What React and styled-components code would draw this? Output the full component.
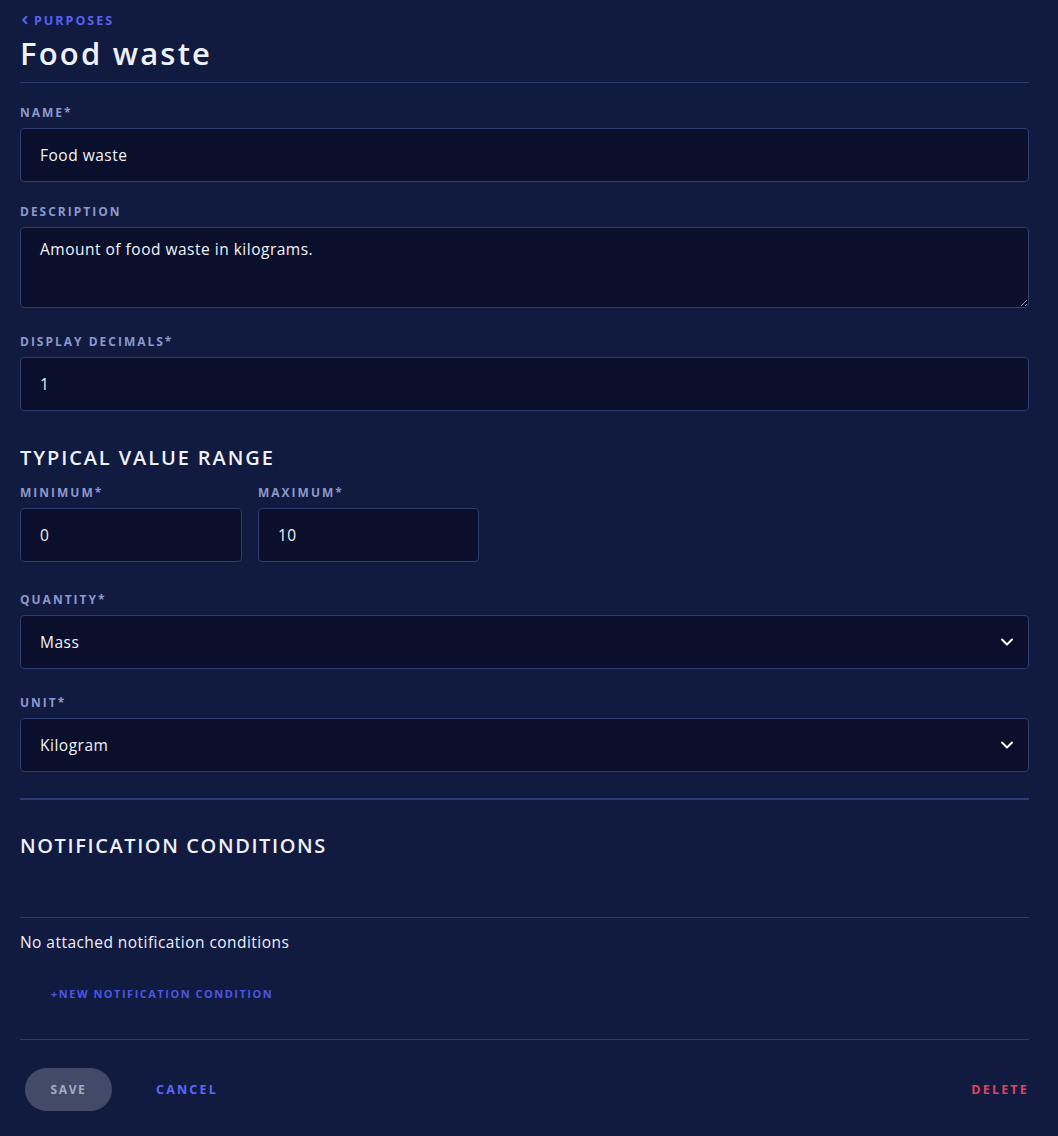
import React, { useState } from "react";
import styled, { createGlobalStyle } from "styled-components";

const GlobalStyle = createGlobalStyle`
  html, body {
    margin: 0;
    padding: 0;
    background: #111a3f;
  }
  body {
    font-family: "Open Sans", "Liberation Sans", sans-serif;
    color: #eef0fa;
  }
`;

const Page = styled.div`
  padding: 13px 29px 26px 20px;
  min-height: 1136px;
  box-sizing: border-box;
  background: #111a3f;
`;

const BackLink = styled.a`
  display: flex;
  align-items: center;
  gap: 4px;
  height: 14px;
  color: #5762f2;
  font-size: 12.5px;
  font-weight: 700;
  letter-spacing: 2px;
  text-decoration: none;
  cursor: pointer;
`;

const Title = styled.h1`
  margin: 7px 0 0;
  font-size: 31px;
  font-weight: 600;
  line-height: 38px;
  color: #eef0fa;
  letter-spacing: 2.2px;
`;

const Divider = styled.hr`
  border: none;
  border-top: ${(p) => (p.thick ? "2px" : "1px")} solid #2d3b74;
  margin: ${(p) => p.space || "0"};
`;

const Field = styled.div`
  display: flex;
  flex-direction: column;
  gap: 8px;
  margin-top: ${(p) => p.top || 0}px;
  flex: ${(p) => (p.width ? `0 0 ${p.width}px` : "none")};
`;

const Label = styled.label`
  font-size: 12px;
  font-weight: 700;
  letter-spacing: 2px;
  color: #8d98cb;
  text-transform: uppercase;
  line-height: 14px;
`;

const Input = styled.input`
  box-sizing: border-box;
  width: 100%;
  height: 54px;
  padding: 0 19px;
  background: #0a0f2b;
  border: 1px solid #2f3c73;
  border-radius: 4px;
  color: #f2f3fb;
  font-family: inherit;
  font-size: 15.5px;
  font-weight: 500;
  letter-spacing: 0.5px;
  outline: none;
`;

const TextArea = styled.textarea`
  display: block;
  box-sizing: border-box;
  width: 100%;
  height: 81px;
  padding: 11px 19px;
  background: #0a0f2b;
  border: 1px solid #2f3c73;
  border-radius: 4px;
  color: #f2f3fb;
  font-family: inherit;
  font-size: 15.5px;
  font-weight: 500;
  letter-spacing: 0.5px;
  line-height: 20px;
  resize: vertical;
  outline: none;
`;

const SelectBox = styled.div`
  box-sizing: border-box;
  height: 54px;
  padding: 0 14px 0 19px;
  display: flex;
  align-items: center;
  justify-content: space-between;
  background: #0a0f2b;
  border: 1px solid #2f3c73;
  border-radius: 4px;
  color: #f2f3fb;
  font-size: 15.5px;
  font-weight: 500;
  letter-spacing: 0.5px;
  cursor: pointer;
`;

const Row = styled.div`
  display: flex;
  gap: 16px;
  margin-top: 16px;
`;

const SectionTitle = styled.h2`
  margin: ${(p) => p.space || "0"};
  font-size: 20px;
  font-weight: 600;
  letter-spacing: ${(p) => p.spacing || 1.8}px;
  text-transform: uppercase;
  color: #eef0fa;
  line-height: 24px;
`;

const EmptyText = styled.p`
  margin: 14px 0 0;
  font-size: 15.5px;
  font-weight: 500;
  letter-spacing: 0.45px;
  color: #eef0fa;
  line-height: 20px;
`;

const TextButton = styled.button`
  background: none;
  border: none;
  padding: 0;
  font-family: inherit;
  font-size: ${(p) => p.size || 12.5}px;
  font-weight: 700;
  letter-spacing: ${(p) => p.spacing || 2.2}px;
  line-height: 16px;
  text-transform: uppercase;
  color: ${(p) => p.color || "#5a68ff"};
  cursor: pointer;
`;

const AddRow = styled.div`
  padding: 0 0 0 31px;
  height: 14px;
  display: flex;
  align-items: center;
  margin: 35px 0 38px;
`;

const Footer = styled.div`
  display: flex;
  align-items: center;
  padding: 28px 0 0 5px;
`;

const SaveButton = styled.button`
  width: 87px;
  height: 43px;
  border: none;
  border-radius: 22px;
  background: #434a69;
  color: #a7abc0;
  font-family: inherit;
  font-size: 12px;
  font-weight: 700;
  letter-spacing: 1.6px;
  cursor: default;
`;

const CancelSlot = styled.div`
  display: flex;
  align-items: center;
  margin-left: 44px;
`;

const Spacer = styled.div`
  flex: 1;
`;

const Chevron = ({ dir = "down", size = 14, stroke = 2 }) => (
  <svg width={size} height={size} viewBox="0 0 14 14" fill="none">
    {dir === "down" ? (
      <path d="M2 4.5l5 5 5-5" stroke="#fff" strokeWidth={stroke} strokeLinecap="round" strokeLinejoin="round" />
    ) : (
      <path d="M9 2.5L4.5 7 9 11.5" stroke="#5762f2" strokeWidth={stroke} strokeLinecap="round" strokeLinejoin="round" />
    )}
  </svg>
);

const App = () => {
  const [name, setName] = useState("Food waste");
  const [description, setDescription] = useState("Amount of food waste in kilograms.");
  const [decimals, setDecimals] = useState("1");
  const [min, setMin] = useState("0");
  const [max, setMax] = useState("10");

  return (
    <>
      <GlobalStyle />
      <Page>
        <BackLink>
          <Chevron dir="left" size={10} stroke={3} />
          PURPOSES
        </BackLink>
        <Title>Food waste</Title>
        <Divider space="10px 0 0" />

        <Field top={23}>
          <Label>Name*</Label>
          <Input value={name} onChange={(e) => setName(e.target.value)} />
        </Field>
        <Field top={23}>
          <Label>Description</Label>
          <TextArea value={description} onChange={(e) => setDescription(e.target.value)} />
        </Field>
        <Field top={27}>
          <Label>Display decimals*</Label>
          <Input value={decimals} onChange={(e) => setDecimals(e.target.value)} />
        </Field>

        <SectionTitle space="35px 0 0" spacing={1.9}>Typical value range</SectionTitle>
        <Row>
          <Field width={222}>
            <Label>Minimum*</Label>
            <Input value={min} onChange={(e) => setMin(e.target.value)} />
          </Field>
          <Field width={221}>
            <Label>Maximum*</Label>
            <Input value={max} onChange={(e) => setMax(e.target.value)} />
          </Field>
        </Row>

        <Field top={31}>
          <Label>Quantity*</Label>
          <SelectBox>
            Mass
            <Chevron />
          </SelectBox>
        </Field>
        <Field top={27}>
          <Label>Unit*</Label>
          <SelectBox>
            Kilogram
            <Chevron />
          </SelectBox>
        </Field>

        <Divider thick space="26px 0 0" />
        <SectionTitle space="34px 0 0" spacing={1.6}>Notification conditions</SectionTitle>
        <Divider space="59px 0 0" />
        <EmptyText>No attached notification conditions</EmptyText>
        <AddRow>
          <TextButton size={11} spacing={1.5} color="#4b57e6">+New notification condition</TextButton>
        </AddRow>
        <Divider />

        <Footer>
          <SaveButton>SAVE</SaveButton>
          <CancelSlot>
            <TextButton>Cancel</TextButton>
          </CancelSlot>
          <Spacer />
          <TextButton color="#e5405f">Delete</TextButton>
        </Footer>
      </Page>
    </>
  );
};

export default App;
